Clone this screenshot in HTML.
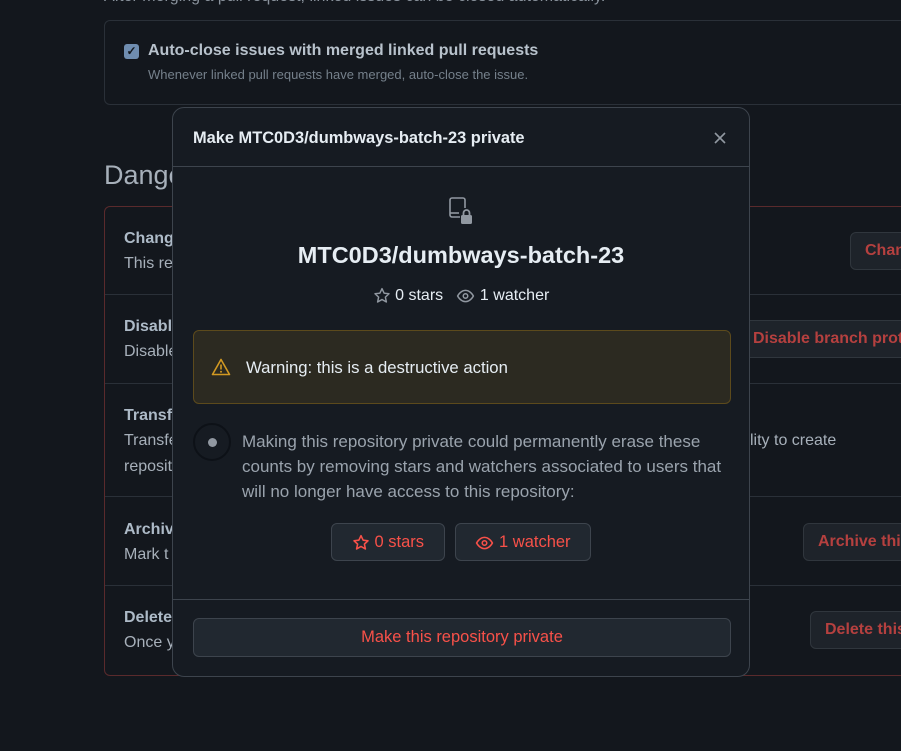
<!DOCTYPE html>
<html><head><style>
*{box-sizing:border-box;margin:0;padding:0}
html,body{width:901px;height:751px;overflow:hidden}
body{background:#13171d;font-family:"Liberation Sans",sans-serif;position:relative;color:#adbac7}
#wrap{position:absolute;left:0;top:0;width:901px;height:751px;overflow:hidden}
.abs{position:absolute}
.dim{color:#a7b0ba}
.btnr{position:absolute;background:#1e232a;border:1px solid #30363d;border-radius:6px;color:#b5403f;font-weight:bold;font-size:16px;height:38px;line-height:36px;padding:0 14px;white-space:nowrap}
.sep{position:absolute;left:105px;width:796px;height:1px;background:#2a3038}
.modal{position:absolute;left:172px;top:107px;width:578px;height:570px;background:#161b22;border:1px solid #3d444d;border-radius:12px;overflow:hidden}
svg{vertical-align:middle}
</style></head><body><div id="wrap">
<div class="abs dim" style="left:104px;top:-12px;font-size:16px;color:#8b949e;white-space:nowrap">After merging a pull request, linked issues can be closed automatically.</div>
<div class="abs" style="left:104px;top:20px;width:820px;height:85px;border:1px solid #2a3038;border-radius:6px"></div>
<div class="abs" style="left:124px;top:44px;width:15px;height:15px;background:#6f8db0;border-radius:3px;color:#13171d;font-size:12px;line-height:15px;text-align:center;font-weight:bold">✓</div>
<div class="abs" style="left:148px;top:42px;font-size:16px;font-weight:bold;color:#b8c2cc;white-space:nowrap">Auto-close issues with merged linked pull requests</div>
<div class="abs" style="left:148px;top:67px;font-size:13px;color:#75808b;white-space:nowrap">Whenever linked pull requests have merged, auto-close the issue.</div>
<div class="abs" style="left:104px;top:160px;font-size:27px;color:#a7b0ba">Danger Zone</div>
<div class="abs" style="left:104px;top:206px;width:830px;height:470px;border:1px solid #5a2a2c;border-radius:6px"></div>
<div class="sep" style="top:294px"></div><div class="sep" style="top:383px"></div><div class="sep" style="top:496px"></div><div class="sep" style="top:585px"></div>
<div class="abs" style="left:124px;top:230px;font-size:16px;font-weight:bold">Change</div><div class="abs dim" style="left:124px;top:255px;font-size:16px">This re</div>
<div class="abs" style="left:124px;top:318px;font-size:16px;font-weight:bold">Disable</div><div class="abs dim" style="left:124px;top:343px;font-size:16px">Disable</div>
<div class="abs" style="left:124px;top:407px;font-size:16px;font-weight:bold">Transfer</div><div class="abs dim" style="left:124px;top:432px;font-size:16px">Transfer</div><div class="abs dim" style="left:124px;top:458px;font-size:16px">reposit</div>
<div class="abs dim" style="left:750px;top:432px;font-size:16px;white-space:nowrap">lity to create</div>
<div class="abs" style="left:124px;top:521px;font-size:16px;font-weight:bold">Archive</div><div class="abs dim" style="left:124px;top:546px;font-size:16px">Mark t</div>
<div class="abs" style="left:124px;top:609px;font-size:16px;font-weight:bold">Delete</div><div class="abs dim" style="left:124px;top:634px;font-size:16px">Once y</div>
<div class="btnr" style="left:850px;top:232px">Change visibility</div>
<div class="btnr" style="left:740px;top:320px;padding-left:12px">Disable branch protection</div>
<div class="btnr" style="left:803px;top:523px">Archive this</div>
<div class="btnr" style="left:810px;top:611px">Delete this</div>

<div class="modal">
 <div class="abs" style="left:20px;top:21px;font-size:16.4px;font-weight:bold;color:#e6edf3;white-space:nowrap">Make MTC0D3/dumbways-batch-23 private</div>
 <svg class="abs" style="left:540px;top:23px" width="14" height="14" viewBox="0 0 14 14"><path d="M2 2l10 10M12 2L2 12" stroke="#9198a1" stroke-width="1.6"/></svg>
 <div class="abs" style="left:0;top:58px;width:100%;height:1px;background:#3d444d"></div>
 <svg class="abs" style="left:274px;top:88px" width="30" height="30" viewBox="0 0 30 30"><path d="M13 21H5a2 2 0 0 1-2-2V4a2 2 0 0 1 2-2h11a2 2 0 0 1 2 2v8" fill="none" stroke="#9198a1" stroke-width="1.6"/><path d="M3 17h9" stroke="#9198a1" stroke-width="1.6"/><rect x="14" y="19" width="11" height="9" rx="1.5" fill="#9198a1"/><path d="M16.5 19v-2a3 3 0 0 1 6 0v2" fill="none" stroke="#9198a1" stroke-width="1.8"/></svg>
 <div class="abs" style="left:0;width:100%;top:134px;text-align:center;font-size:23.5px;font-weight:bold;color:#e6edf3">MTC0D3/dumbways-batch-23</div>
 <div class="abs" style="left:0;width:100%;top:179px;text-align:center;font-size:16px;color:#e6edf3;white-space:nowrap">
  <svg width="18" height="18" viewBox="0 0 16 16"><path d="M8 1.5l1.9 4 4.3.5-3.2 3 .9 4.3L8 11.1l-3.9 2.2.9-4.3-3.2-3 4.3-.5z" fill="none" stroke="#9198a1" stroke-width="1.3" stroke-linejoin="round"/></svg> 0 stars &nbsp;&nbsp;<svg width="19" height="18" viewBox="0 0 16 16"><path d="M1 8s2.5-5 7-5 7 5 7 5-2.5 5-7 5-7-5-7-5z" fill="none" stroke="#9198a1" stroke-width="1.3"/><circle cx="8" cy="8" r="2" fill="none" stroke="#9198a1" stroke-width="1.3"/></svg> 1 watcher</div>
 <div class="abs" style="left:20px;top:222px;width:538px;height:74px;background:#2c2a21;border:1px solid #5c4a1c;border-radius:6px"></div>
 <svg class="abs" style="left:38px;top:250px" width="20" height="18" viewBox="0 0 20 18"><path d="M10 1.5L1.5 16.5h17z" fill="none" stroke="#d29922" stroke-width="1.6" stroke-linejoin="round"/><path d="M10 6.5v5" stroke="#d29922" stroke-width="1.6"/><circle cx="10" cy="13.7" r="1" fill="#d29922"/></svg>
 <div class="abs" style="left:73px;top:250px;font-size:16.7px;color:#e6edf3;white-space:nowrap">Warning: this is a destructive action</div>
 <div class="abs" style="left:20px;top:315px;width:38px;height:38px;border-radius:50%;border:2px solid #0d1117;background:#161b22"></div>
 <div class="abs" style="left:35px;top:330px;width:9px;height:9px;border-radius:50%;background:#9198a1"></div>
 <div class="abs" style="left:69px;top:321px;width:495px;font-size:17px;line-height:25px;color:#9aa3ad">Making this repository private could permanently erase these counts by removing stars and watchers associated to users that will no longer have access to this repository:</div>
 <div class="abs" style="left:158px;top:415px;width:114px;height:38px;background:#212830;border:1px solid #3d444d;border-radius:6px;color:#f85149;font-size:16.5px;line-height:36px;text-align:center;white-space:nowrap"><svg width="18" height="18" viewBox="0 0 16 16"><path d="M8 1.5l1.9 4 4.3.5-3.2 3 .9 4.3L8 11.1l-3.9 2.2.9-4.3-3.2-3 4.3-.5z" fill="none" stroke="#f85149" stroke-width="1.4" stroke-linejoin="round"/></svg> 0 stars</div>
 <div class="abs" style="left:282px;top:415px;width:136px;height:38px;background:#212830;border:1px solid #3d444d;border-radius:6px;color:#f85149;font-size:16.5px;line-height:36px;text-align:center;white-space:nowrap"><svg width="19" height="18" viewBox="0 0 16 16"><path d="M1 8s2.5-5 7-5 7 5 7 5-2.5 5-7 5-7-5-7-5z" fill="none" stroke="#f85149" stroke-width="1.4"/><circle cx="8" cy="8" r="2" fill="none" stroke="#f85149" stroke-width="1.4"/></svg> 1 watcher</div>
 <div class="abs" style="left:0;top:491px;width:100%;height:1px;background:#3d444d"></div>
 <div class="abs" style="left:20px;top:510px;width:538px;height:39px;background:#212830;border:1px solid #3d444d;border-radius:6px;color:#f85149;font-size:16.5px;line-height:37px;text-align:center">Make this repository private</div>
</div>
</div></body></html>
